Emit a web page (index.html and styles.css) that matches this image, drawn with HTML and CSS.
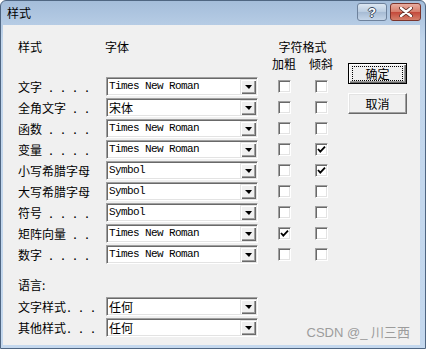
FILE: index.html
```html
<!DOCTYPE html>
<html>

<head>
    <title>样式</title>
    <link rel="stylesheet" href="styles.css">
</head>

<body>
    <div class="window">
        <div class="titlebar">
            <span class="title">样式</span>
            <div class="caption-buttons">
                <span class="cap-btn help">?</span>
                <span class="cap-btn close">
                    <svg width="14" height="10" viewBox="0 0 14 10">
                        <path d="M2 1 L12 9 M12 1 L2 9" stroke="#5a2a22" stroke-width="4" stroke-linecap="round" />
                        <path d="M2 1 L12 9 M12 1 L2 9" stroke="#fff" stroke-width="2.4" stroke-linecap="round" />
                    </svg>
                </span>
            </div>
        </div>

        <div class="client">
            <div class="form">
                <div class="head-row">
                    <span class="label">样式</span>
                    <span class="font-head">字体</span>
                    <span class="fmt-head">字符格式</span>
                </div>
                <div class="head-row sub">
                    <span class="label"></span>
                    <span class="combo-space"></span>
                    <span class="cell first">加粗</span>
                    <span class="cell">倾斜</span>
                </div>

                <div class="rows">
                    <div class="row">
                        <span class="label">文字<span class="dots"> . . . .</span></span>
                        <div class="combo"><span class="value mono">Times New Roman</span><span class="drop"></span></div>
                        <span class="cell first"><span class="check"></span></span>
                        <span class="cell"><span class="check"></span></span>
                    </div>
                    <div class="row">
                        <span class="label">全角文字<span class="dots"> . .</span></span>
                        <div class="combo"><span class="value">宋体</span><span class="drop"></span></div>
                        <span class="cell first"><span class="check"></span></span>
                        <span class="cell"><span class="check"></span></span>
                    </div>
                    <div class="row">
                        <span class="label">函数<span class="dots"> . . . .</span></span>
                        <div class="combo"><span class="value mono">Times New Roman</span><span class="drop"></span></div>
                        <span class="cell first"><span class="check"></span></span>
                        <span class="cell"><span class="check"></span></span>
                    </div>
                    <div class="row">
                        <span class="label">变量<span class="dots"> . . . .</span></span>
                        <div class="combo"><span class="value mono">Times New Roman</span><span class="drop"></span></div>
                        <span class="cell first"><span class="check"></span></span>
                        <span class="cell"><span class="check"><svg width="11" height="11" viewBox="0 0 11 11"><path d="M2 5 L4.3 7.6 L9 2.6" stroke="#000" stroke-width="1.8" fill="none" /></svg></span></span>
                    </div>
                    <div class="row">
                        <span class="label">小写希腊字母</span>
                        <div class="combo"><span class="value mono">Symbol</span><span class="drop"></span></div>
                        <span class="cell first"><span class="check"></span></span>
                        <span class="cell"><span class="check"><svg width="11" height="11" viewBox="0 0 11 11"><path d="M2 5 L4.3 7.6 L9 2.6" stroke="#000" stroke-width="1.8" fill="none" /></svg></span></span>
                    </div>
                    <div class="row">
                        <span class="label">大写希腊字母</span>
                        <div class="combo"><span class="value mono">Symbol</span><span class="drop"></span></div>
                        <span class="cell first"><span class="check"></span></span>
                        <span class="cell"><span class="check"></span></span>
                    </div>
                    <div class="row">
                        <span class="label">符号<span class="dots"> . . . .</span></span>
                        <div class="combo"><span class="value mono">Symbol</span><span class="drop"></span></div>
                        <span class="cell first"><span class="check"></span></span>
                        <span class="cell"><span class="check"></span></span>
                    </div>
                    <div class="row">
                        <span class="label">矩阵向量<span class="dots"> . .</span></span>
                        <div class="combo"><span class="value mono">Times New Roman</span><span class="drop"></span></div>
                        <span class="cell first"><span class="check"><svg width="11" height="11" viewBox="0 0 11 11"><path d="M2 5 L4.3 7.6 L9 2.6" stroke="#000" stroke-width="1.8" fill="none" /></svg></span></span>
                        <span class="cell"><span class="check"></span></span>
                    </div>
                    <div class="row">
                        <span class="label">数字<span class="dots"> . . . .</span></span>
                        <div class="combo"><span class="value mono">Times New Roman</span><span class="drop"></span></div>
                        <span class="cell first"><span class="check"></span></span>
                        <span class="cell"><span class="check"></span></span>
                    </div>
                </div>

                <div class="lang-head">语言:</div>
                <div class="lang-rows">
                    <div class="row">
                        <span class="label">文字样式<span class="dots">. . .</span></span>
                        <div class="combo"><span class="value">任何</span><span class="drop"></span></div>
                    </div>
                    <div class="row">
                        <span class="label">其他样式<span class="dots">. . .</span></span>
                        <div class="combo"><span class="value">任何</span><span class="drop"></span></div>
                    </div>
                </div>
            </div>

            <div class="side">
                <button class="btn default"><span class="focus">确定</span></button>
                <button class="btn">取消</button>
            </div>

            <div class="watermark">CSDN @_ 川三西</div>
        </div>
    </div>
</body>

</html>
```

FILE: styles.css
```css
body {
    margin: 0;
    font-family: "Noto Sans CJK SC", sans-serif;
    font-size: 12px;
    color: #000;
    background-color: #fff;
}

.window {
    width: 426px;
    height: 349px;
    box-sizing: border-box;
    border: 1px solid #4f6682;
    border-radius: 6px 6px 0 0;
    background: linear-gradient(#a4bdda, #c2d6ec 40px, #c4d8ee);
    display: flex;
    flex-direction: column;
}

.titlebar {
    height: 24px;
    display: flex;
    align-items: flex-start;
    padding-left: 6px;
}

.title {
    line-height: 24px;
}

.caption-buttons {
    margin-left: auto;
    margin-right: 4px;
    padding-top: 2px;
    display: flex;
    gap: 3px;
}

.cap-btn {
    height: 18px;
    box-sizing: border-box;
    border-radius: 3px;
    display: flex;
    align-items: center;
    justify-content: center;
}

.help {
    width: 30px;
    border: 1px solid #6e829c;
    background: linear-gradient(#dde7f2, #b9cbe0 50%, #a6bbd4 51%, #c4d5e8);
    color: #fff;
    font-family: "Liberation Sans", sans-serif;
    font-weight: bold;
    font-size: 13px;
    text-shadow: 1px 0 #3a4a60, -1px 0 #3a4a60, 0 1px #3a4a60, 0 -1px #3a4a60;
}

.close {
    width: 31px;
    border: 1px solid #7b342c;
    background: linear-gradient(#e9ada0, #d67c6a 50%, #c4483a 51%, #d5806b);
}

.client {
    flex: 1;
    margin: 0 5px 3px 2px;
    background-color: #f0f0f0;
    position: relative;
    display: flex;
}

.form {
    padding: 14px 0 0 15px;
}

.head-row {
    height: 16px;
    line-height: 16px;
    display: flex;
}

.head-row.sub {
    margin-top: 1px;
    margin-bottom: 4px;
}

.label {
    width: 88px;
    flex-shrink: 0;
    white-space: nowrap;
}

.font-head {
    width: 152px;
    margin-left: -1px;
}

.fmt-head {
    margin-left: 14px;
    width: 63px;
    text-align: center;
}

.combo-space {
    width: 152px;
}

.cell {
    width: 26px;
    margin-left: 11px;
    display: flex;
    justify-content: center;
}

.cell.first {
    margin-left: 13px;
}

.row {
    height: 21px;
    display: flex;
    align-items: center;
}

.dots {
    font-family: "Liberation Mono", monospace;
    font-size: 10px;
    font-weight: bold;
    white-space: pre;
}

.combo {
    width: 152px;
    height: 19px;
    box-sizing: border-box;
    background-color: #fff;
    border: 1px solid;
    border-color: #a0a0a0 #fff #fff #a0a0a0;
    box-shadow: inset 1px 1px #696969, inset -1px -1px #e3e3e3;
    display: flex;
    padding: 1px;
}

.value {
    flex: 1;
    padding-left: 1px;
    line-height: 15px;
    white-space: nowrap;
}

.value.mono {
    font-family: "Liberation Mono", monospace;
    font-size: 11px;
    letter-spacing: -0.6px;
}

.drop {
    width: 16px;
    background-color: #f0f0f0;
    box-shadow: inset 1px 1px #e3e3e3, inset 2px 2px #fff, inset -1px -1px #696969, inset -2px -2px #a0a0a0;
    display: flex;
    align-items: center;
    justify-content: center;
}

.drop::after {
    content: "";
    width: 0;
    height: 0;
    border-left: 4px solid transparent;
    border-right: 3px solid transparent;
    border-top: 4px solid #000;
    margin-left: 1px;
}

.check {
    width: 13px;
    height: 13px;
    box-sizing: border-box;
    background-color: #fff;
    border: 1px solid;
    border-color: #a0a0a0 #fff #fff #a0a0a0;
    box-shadow: inset 1px 1px #696969, inset -1px -1px #e3e3e3;
    display: flex;
    align-items: center;
    justify-content: center;
}

.check svg {
    display: block;
}

.lang-head {
    margin-top: 12px;
    height: 16px;
    line-height: 16px;
}

.lang-rows {
    margin-top: 3px;
}

.side {
    padding-top: 38px;
    margin-left: 14px;
    display: flex;
    flex-direction: column;
    gap: 9px;
}

.btn {
    width: 59px;
    height: 21px;
    box-sizing: border-box;
    padding: 0;
    font-family: "Noto Sans CJK SC", sans-serif;
    font-size: 12px;
    color: #000;
    background-color: #f0f0f0;
    border: 1px solid;
    border-color: #fff #696969 #696969 #fff;
    box-shadow: inset -1px -1px #a0a0a0, inset 1px 1px #e3e3e3;
    display: flex;
    align-items: center;
    justify-content: center;
}

.btn.default {
    border: 1px solid #000;
    box-shadow: inset 1px 1px #fff, inset -1px -1px #696969, inset -2px -2px #a0a0a0;
}

.focus {
    width: 49px;
    height: 13px;
    line-height: 13px;
    border: 1px dotted #000;
}

.watermark {
    position: absolute;
    right: 10px;
    bottom: 4px;
    line-height: 16px;
    font-family: "Liberation Sans", "Noto Sans CJK SC", sans-serif;
    font-size: 13px;
    color: #9c9c9c;
}
```
